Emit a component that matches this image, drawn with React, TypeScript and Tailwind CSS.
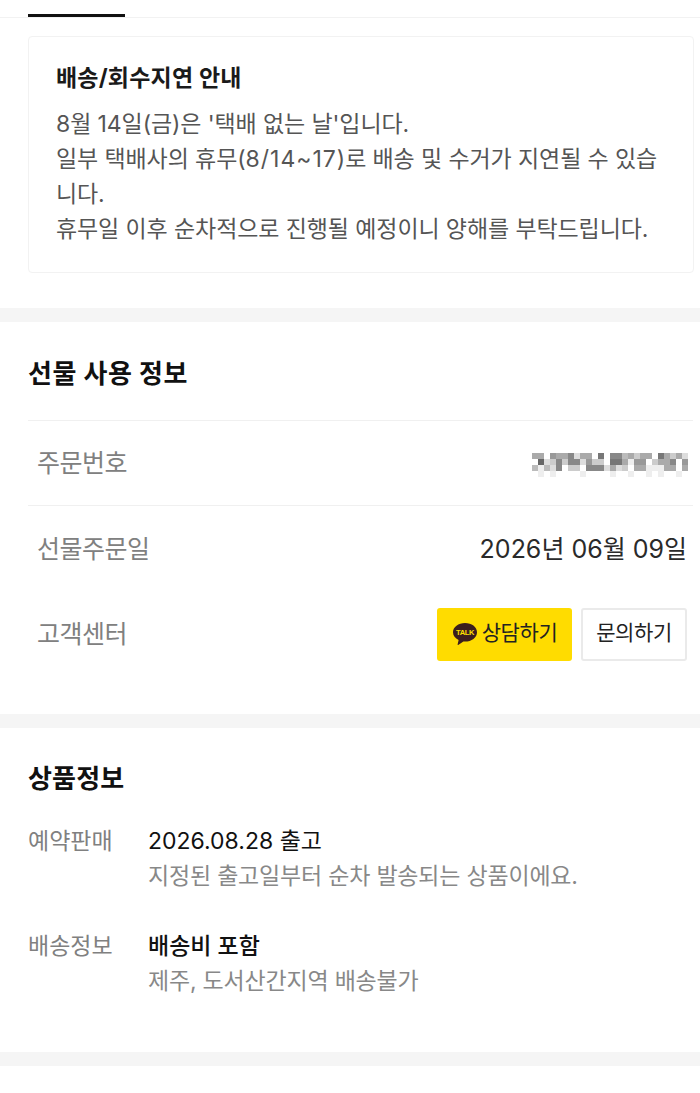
const F = { fontFamily: 'Inter, "Noto Sans CJK KR", "Noto Sans", sans-serif' };

const rows = [
  "a a f 9 a a 8 d a a f 7 f 8 8 b a c a a f 7 a c a d".split(" "),
  "f 6 d c 8 c 8 8 d 9 c c f 7 7 a e 9 9 f c a a 8 f 9".split(" "),
  "b e b d 8 f c c f 8 8 8 d a d c f a a e e e a a f a".split(" "),
  "f e f e f f f f e f f f f e f f e f f e f e f f e f".split(" "),
];

function Mosaic() {
  return (
    <svg width="156" height="24" viewBox="0 0 156 24" aria-hidden="true">
      {rows.map((r, y) =>
        r.map((c, x) => (
          <rect key={`${x}-${y}`} x={x * 6} y={y * 6} width="6" height="6" fill={`#${c}${c}${c}`} />
        )),
      )}
    </svg>
  );
}

function TalkIcon() {
  return (
    <svg width="26" height="24" viewBox="0 0 26 24" className="shrink-0">
      <path d="M13 1C6.400 1 1 5.100 1 10.200c0 3.300 2.200 6.200 5.600 7.800l-1 4.500c-.1.400.3.600.6.400l5.200-3.400c.5 0 1.100.1 1.600.1 6.600 0 12-4.100 12-9.400S19.600 1 13 1z" fill="#3c1e1e" />
      <text x="13" y="13" textAnchor="middle" fontSize="7.500" fontWeight="700" fill="#ffe000" style={{ fontFamily: '"Liberation Sans", sans-serif' }}>TALK</text>
    </svg>
  );
}

export default function App() {
  return (
    <div className="w-[700px] h-[1093px] bg-white overflow-hidden" style={F}>
      <div className="h-[18px] pt-[14px] border-b border-[#f2f2f2] pl-7">
        <div className="w-[97px] h-[3px] bg-[#111111]" />
      </div>

      <section className="px-7 pt-[18px] pb-[35px]">
        <div className="w-[666px] h-[237px] border border-[#f2f2f2] rounded pl-[27px] pr-6 pt-[25px]">
          <h3 className="text-[23px] leading-[32px] font-bold text-[#1a1a1a] tracking-[0.2px]">배송/회수지연 안내</h3>
          <p className="mt-[13px] text-[23px] leading-[35px] text-[#555555] tracking-[-0.1px]">
            8월 14일(금)은 '택배 없는 날'입니다.<br />
            일부 택배사의 휴무(<span className="tracking-[1px]">8/14~17</span>)로 배송 및 수거가 지연될 수 있습<br />
            니다.<br />
            휴무일 이후 순차적으로 진행될 예정이니 양해를 부탁드립니다.
          </p>
        </div>
      </section>

      <div className="h-[14px] bg-[#f5f5f5]" />

      <section className="pl-7 pr-[7px] h-[392px]">
        <h2 className="pt-[33px] h-[99px] text-[26px] leading-[38px] font-bold text-[#111111] tracking-[0.5px] border-b border-[#f0f0f0]">선물 사용 정보</h2>
        <div className="h-[85px] flex items-center justify-between pl-[9px] border-b border-[#f0f0f0]">
          <span className="pt-[2px] text-[25px] text-[#808080] tracking-[-0.5px]">주문번호</span>
          <div className="mr-[5px] mt-[3px]"><Mosaic /></div>
        </div>
        <div className="h-[85px] flex items-center justify-between pl-[9px] pr-[6px]">
          <span className="pt-[2px] text-[25px] text-[#808080] tracking-[-0.5px]">선물주문일</span>
          <span className="pt-[2px] text-[25px] text-[#2a2a2a]">2026년 06월 09일</span>
        </div>
        <div className="h-[85px] flex items-center justify-between pl-[9px] pr-[6px]">
          <span className="pt-[2px] text-[25px] text-[#808080] tracking-[-0.5px]">고객센터</span>
          <div className="flex gap-[9px] mt-[2px]">
            <div className="w-[135px] h-[53px] pb-[2px] bg-[#ffdc00] rounded-[3px] flex items-center justify-center gap-[4px] text-[21px] text-[#222222] tracking-[-0.4px]">
              <TalkIcon /><span className="pb-[2px]">상담하기</span>
            </div>
            <div className="w-[106px] h-[53px] pb-[4px] border-2 border-[#eaeaea] rounded-[3px] flex items-center justify-center text-[21px] text-[#222222] tracking-[-0.4px]">문의하기</div>
          </div>
        </div>
      </section>

      <div className="h-[14px] bg-[#f5f5f5]" />

      <section className="px-7 h-[324px]">
        <h2 className="pt-[32px] text-[26px] leading-[38px] font-bold text-[#111111] tracking-[0.2px]">상품정보</h2>
        <div className="mt-[26px] flex">
          <span className="w-[120px] text-[23px] leading-[35px] text-[#808080]">예약판매</span>
          <div>
            <p className="text-[23px] leading-[35px] text-[#111111]">2026.08.28 출고</p>
            <p className="text-[23px] leading-[35px] text-[#888888] tracking-[-0.2px]">지정된 출고일부터 순차 발송되는 상품이에요.</p>
          </div>
        </div>
        <div className="mt-[35px] flex">
          <span className="w-[120px] text-[23px] leading-[35px] text-[#808080]">배송정보</span>
          <div>
            <p className="text-[23px] leading-[35px] text-[#111111] font-medium">배송비 포함</p>
            <p className="text-[23px] leading-[35px] text-[#888888] tracking-[-0.2px]">제주, 도서산간지역 배송불가</p>
          </div>
        </div>
      </section>

      <div className="h-[14px] bg-[#f5f5f5]" />
    </div>
  );
}
